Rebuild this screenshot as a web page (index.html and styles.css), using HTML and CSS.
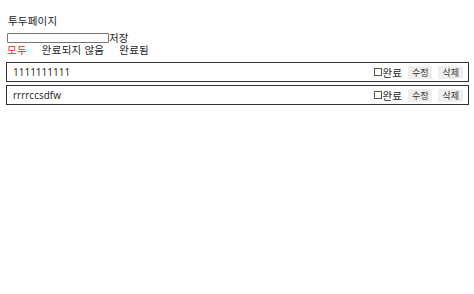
FILE: index.html
```html
<!DOCTYPE html>
<html lang="ko">
<head>
<meta charset="utf-8">
<link rel="stylesheet" href="styles.css">
</head>
<body>
<div class="page">
  <h1 class="title">투두페이지</h1>
  <form class="add">
    <input class="add-input" type="text"><span class="add-btn">저장</span>
  </form>
  <div class="filters">
    <span class="filter active">모두</span>
    <span class="filter">완료되지 않음</span>
    <span class="filter">완료됨</span>
  </div>
  <ul class="list">
    <li class="item">
      <span class="item-text">1111111111</span>
      <span class="item-actions">
        <span class="done"><span class="box"></span>완료</span>
        <span class="btn">수정</span>
        <span class="btn">삭제</span>
      </span>
    </li>
    <li class="item">
      <span class="item-text">rrrrccsdfw</span>
      <span class="item-actions">
        <span class="done"><span class="box"></span>완료</span>
        <span class="btn">수정</span>
        <span class="btn">삭제</span>
      </span>
    </li>
  </ul>
</div>
</body>
</html>
```
FILE: styles.css
```css
html, body {
  margin: 0;
  padding: 0;
  background: #fff;
}
body {
  font-family: "Open Sans", "Noto Sans CJK KR", sans-serif;
  font-size: 10.5px;
  color: #222;
}
.page {
  padding: 14px 6px 0 6px;
}
.title {
  font-size: 10.5px;
  font-weight: normal;
  margin: 0 0 0 2px;
  line-height: 14px;
  letter-spacing: 0.2px;
}
.add {
  display: flex;
  align-items: center;
  margin: 4px 0 0 1px;
  height: 12px;
}
.add-input {
  width: 102px;
  height: 10px;
  box-sizing: border-box;
  border: 1px solid #767676;
  border-radius: 1px;
  padding: 0;
  margin: 0;
}
.add-btn {
  line-height: 12px;
}
.filters {
  display: flex;
  gap: 15px;
  margin-left: 1px;
  line-height: 13px;
  letter-spacing: 0.25px;
}
.filter.active {
  color: #e0302a;
}
.list {
  list-style: none;
  margin: 5px 0 0 0;
  padding: 0;
  display: flex;
  flex-direction: column;
  gap: 3px;
  width: 463px;
}
.item {
  display: flex;
  align-items: center;
  justify-content: space-between;
  height: 20px;
  box-sizing: border-box;
  border: 1px solid #333;
  padding: 0 5px 0 6px;
}
.item-text {
  font-size: 10px;
}
.item-actions {
  display: flex;
  align-items: center;
  gap: 6px;
}
.done {
  display: flex;
  align-items: center;
}
.box {
  display: inline-block;
  width: 6px;
  height: 6px;
  border: 1px solid #555;
  margin-right: 1px;
}
.btn {
  background: #efefef;
  font-size: 9px;
  line-height: 13px;
  padding: 0 4px;
  color: #333;
}
```
